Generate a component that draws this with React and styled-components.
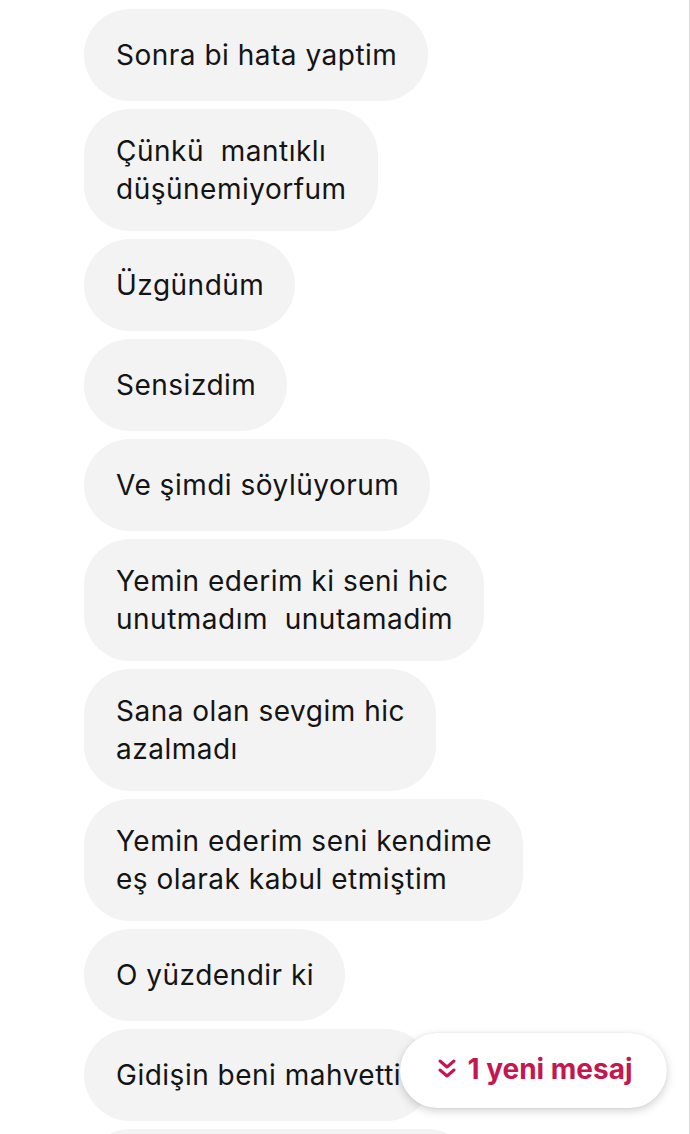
import React from "react";
import styled, { createGlobalStyle } from "styled-components";

const GlobalStyle = createGlobalStyle`
  html, body {
    margin: 0;
    padding: 0;
    background: #ffffff;
    overflow: hidden;
  }
  body {
    font-family: Inter, Roboto, "Noto Sans", "Liberation Sans", sans-serif;
  }
`;

const messages = [
  ["Sonra bi hata yaptim"],
  ["Çünkü  mantıklı", "düşünemiyorfum"],
  ["Üzgündüm"],
  ["Sensizdim"],
  ["Ve şimdi söylüyorum"],
  ["Yemin ederim ki seni hic", "unutmadım  unutamadim"],
  ["Sana olan sevgim hic", "azalmadı"],
  ["Yemin ederim seni kendime", "eş olarak kabul etmiştim"],
  ["O yüzdendir ki"],
  ["Gidişin beni mahvetti"],
];

const Screen = styled.div`
  position: relative;
  width: 690px;
  height: 1134px;
  box-sizing: border-box;
  border-right: 1px solid #dcdcdc;
  overflow: hidden;
`;

const Thread = styled.div`
  display: flex;
  flex-direction: column;
  align-items: flex-start;
  gap: 8px;
  padding: 9px 0 0 84px;
`;

const Bubble = styled.div`
  box-sizing: border-box;
  min-height: 92px;
  width: ${(p) => (p.$width ? `${p.$width}px` : "auto")};
  display: flex;
  flex-direction: column;
  justify-content: center;
  padding: 23px 31px 23px 32px;
  background: #f3f3f3;
  border-radius: 46px;
  color: #141414;
  font-size: 28px;
  letter-spacing: 0.5px;
  line-height: 38px;
  white-space: pre;
`;

const NewMessage = styled.button`
  position: absolute;
  left: 400px;
  top: 1033px;
  width: 267px;
  height: 75px;
  display: flex;
  align-items: center;
  justify-content: center;
  gap: 11px;
  border: none;
  border-radius: 38px;
  background: #ffffff;
  box-shadow: 0 3px 10px rgba(0, 0, 0, 0.18), 0 0 2px rgba(0, 0, 0, 0.08);
  color: #c4174f;
  font-family: Inter, Roboto, "Noto Sans", sans-serif;
  font-size: 28px;
  font-weight: 650;
  padding: 0 0 4px 4px;
`;

const ChevronsDown = () => (
  <svg width="18" height="22" viewBox="0 0 18 22" fill="none">
    <path
      d="M2 3l7 6 7-6M2 12l7 6 7-6"
      stroke="#c4174f"
      strokeWidth="3"
      strokeLinecap="round"
      strokeLinejoin="round"
    />
  </svg>
);

export default function App() {
  return (
    <Screen>
      <GlobalStyle />
      <Thread>
        {messages.map((lines, i) => (
          <Bubble key={i}>
            {lines.map((l, j) => (
              <span key={j}>{l}</span>
            ))}
          </Bubble>
        ))}
        <Bubble $width={390} />
      </Thread>
      <NewMessage>
        <ChevronsDown />
        <span>1 yeni mesaj</span>
      </NewMessage>
    </Screen>
  );
}
